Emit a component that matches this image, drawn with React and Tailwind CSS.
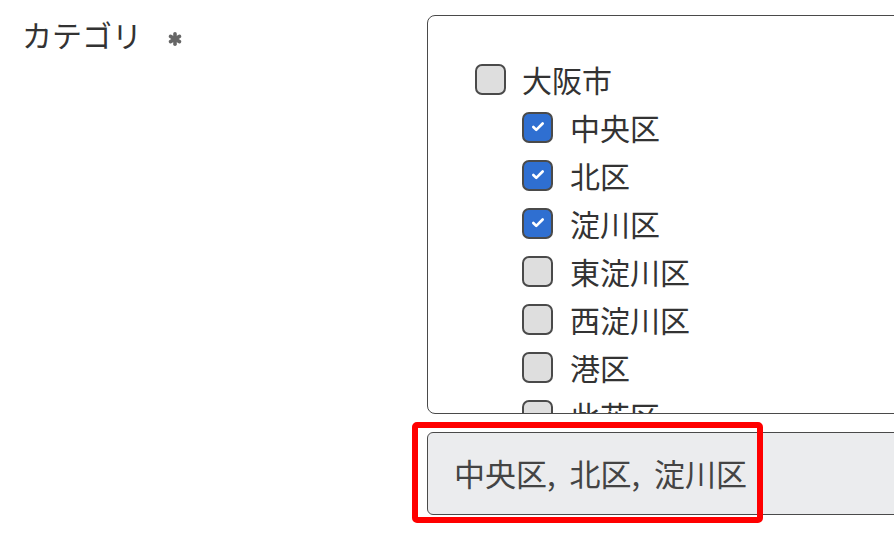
import { Check } from 'lucide-react'

const wards = [
  { name: '中央区', checked: true },
  { name: '北区', checked: true },
  { name: '淀川区', checked: true },
  { name: '東淀川区', checked: false },
  { name: '西淀川区', checked: false },
  { name: '港区', checked: false },
  { name: '此花区', checked: false },
]

function Box({ checked }) {
  return (
    <span
      className={
        'flex h-[31px] w-[31px] shrink-0 items-center justify-center rounded-[7px] border-2 border-[#4a4a4a] ' +
        (checked ? 'bg-[#2f6fd1]' : 'bg-[#dedede]')
      }
    >
      {checked && <Check size={14} strokeWidth={4.5} className="text-white" />}
    </span>
  )
}

function Required() {
  return (
    <svg width="14" height="14" viewBox="0 0 14 14" className="mt-[10px]">
      <g stroke="#666" strokeWidth="3.6" strokeLinecap="round">
        <line x1="7" y1="1.8" x2="7" y2="12.2" />
        <line x1="2.5" y1="4.4" x2="11.5" y2="9.6" />
        <line x1="2.5" y1="9.6" x2="11.5" y2="4.4" />
      </g>
    </svg>
  )
}

export default function App() {
  const selected = wards.filter((w) => w.checked).map((w) => w.name).join(', ')

  return (
    <div className="flex h-[534px] w-[894px] overflow-hidden bg-white font-['Noto_Sans_CJK_JP',sans-serif] text-[30px] text-[#333]">
      <div className="flex w-[427px] shrink-0 items-center gap-[26px] self-start pl-[22px] pt-[11px]">
        <span className="leading-[46px]">カテゴリ</span>
        <Required />
      </div>

      <div className="w-[520px] shrink-0 pt-[15px]">
        <div className="h-[399px] overflow-hidden rounded-[8px] border-[1.5px] border-[#4a4a4a] bg-white pl-[47px] pt-[39px]">
          <label className="flex h-[48px] items-center gap-[16px]">
            <Box checked={false} />
            <span>大阪市</span>
          </label>
          <div className="pl-[47px]">
            {wards.map((w) => (
              <label key={w.name} className="flex h-[48px] items-center gap-[17px]">
                <Box checked={w.checked} />
                <span>{w.name}</span>
              </label>
            ))}
          </div>
        </div>

        <div className="relative mt-[18px]">
          <div className="flex h-[83px] items-center rounded-[6px] border-[1.5px] border-[#4a4a4a] bg-[#ebecee] pl-[26px] text-[31px] text-[#444] [word-spacing:7px]">
            {selected}
          </div>
          <div className="pointer-events-none absolute left-[-15px] top-[-10px] h-[101px] w-[351px] rounded-[5px] border-[6px] border-[#ff0000]" />
        </div>
      </div>
    </div>
  )
}
